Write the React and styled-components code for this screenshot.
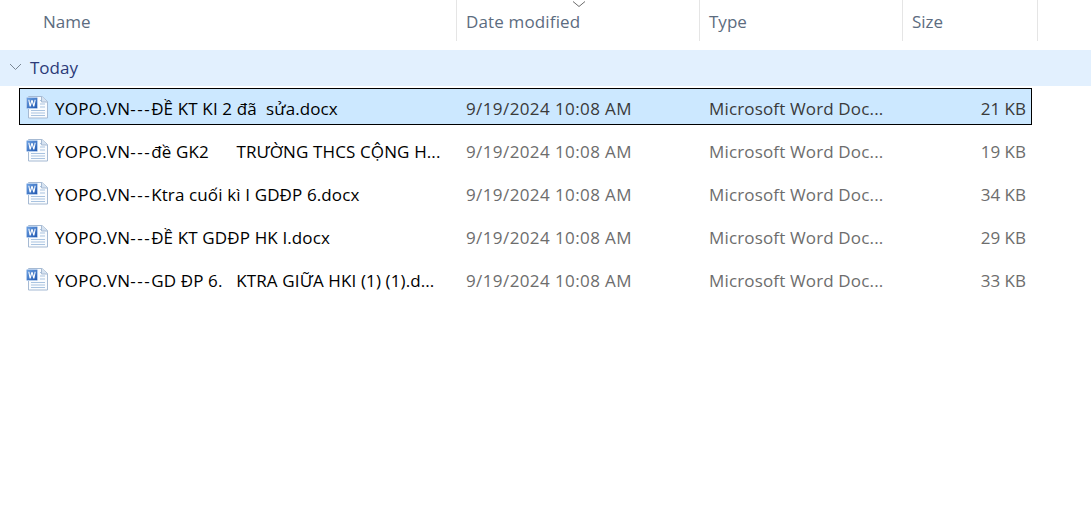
import React from "react";
import styled, { createGlobalStyle } from "styled-components";

const Global = createGlobalStyle`
  html, body { margin: 0; padding: 0; background: #fff; }
  body { font-family: "Open Sans", "Noto Sans", "Liberation Sans", sans-serif; }
`;

const Page = styled.div`
  width: 1091px;
  height: 519px;
  overflow: hidden;
  background: #fff;
`;

const Header = styled.div`
  display: grid;
  grid-template-columns: 457px 243px 203px 135px;
  height: 41px;
  margin-bottom: 9px;
`;

const HeaderCell = styled.div`
  position: relative;
  box-sizing: border-box;
  height: 41px;
  padding: 10px 0 0 ${(p) => p.$pad}px;
  font-size: 17px;
  line-height: 23px;
  letter-spacing: ${(p) => p.$ls || 0}px;
  color: #5c6c80;
  border-right: 1px solid #e5e5e5;
  white-space: nowrap;
`;

const SortArrow = styled.svg`
  position: absolute;
  left: 115px;
  top: 0;
  width: 14px;
  height: 8px;
`;

const Group = styled.div`
  display: flex;
  align-items: center;
  box-sizing: border-box;
  height: 36px;
  background: #e2f0fe;
  padding: 0 0 2px 9px;
  gap: 8px;
  margin-bottom: 2px;
`;

const GroupLabel = styled.span`
  font-size: 17px;
  line-height: 23px;
  color: #2b3a78;
`;

const Row = styled.div`
  display: grid;
  grid-template-columns: 446px 243px 203px 114px;
  box-sizing: border-box;
  align-items: center;
  width: 1013px;
  height: 37px;
  margin: 0 0 6px 19px;
  border: 1px solid ${(p) => (p.$selected ? "#000" : "transparent")};
  background: ${(p) => (p.$selected ? "#cce8ff" : "transparent")};
  color: ${(p) => (p.$selected ? "#3a3a3a" : "#6d6d6d")};
  font-size: 17px;
  line-height: 23px;
  padding-top: 4px;
  white-space: pre;
`;

const NameCell = styled.div`
  display: flex;
  align-items: center;
  padding-left: 5px;
  color: #000;
`;

const IconSlot = styled.span`
  display: flex;
  margin-top: -4px;
`;

const FileName = styled.span`
  margin-left: 5px;
  letter-spacing: 0.24px;
`;

const Dashes = styled.span`
  letter-spacing: 1.5px;
`;

const Rest = styled.span`
  letter-spacing: 0.1px;
  word-spacing: 0.1px;
`;

const DateCell = styled.div`
  letter-spacing: 0.4px;
`;

const TypeCell = styled.div`
  letter-spacing: 0.15px;
`;

const SizeCell = styled.div`
  text-align: right;
`;

const WordIcon = () => (
  <svg width="25" height="24" viewBox="0 0 25 24">
    <defs>
      <linearGradient id="wordBadge" x1="0" y1="0" x2="1" y2="1">
        <stop offset="0" stopColor="#6ea3e4" />
        <stop offset="1" stopColor="#1f55ad" />
      </linearGradient>
    </defs>
    <path d="M3.500 1.500H17l5.500 5v16.500h-19z" fill="#fafcfe" stroke="#a6bad3" />
    <path d="M16.500 1.500v5.500h6" fill="#d5e2f1" stroke="#a6bad3" />
    <path d="M6 15.500h14M6 18h14M6 20.500h14M15 5.500h1M15 9h5M15 12h5" stroke="#a9c3e0" fill="none" />
    <rect x="1.500" y="2.500" width="11" height="11" rx="1" fill="url(#wordBadge)" stroke="#b4cdee" />
    <path d="M3.300 4.700l1.300 6.800h1.100L7 7l1.300 4.500h1.100l1.300-6.800H9.600l-.7 4.400L7.500 5h-1L5.100 9.100l-.7-4.400z" fill="#fff" />
  </svg>
);

const files = [
  { rest: "ĐỀ KT KI 2 đã  sửa.docx", size: "21 KB", selected: true },
  { rest: "đề GK2      TRƯỜNG THCS CỘNG H...", size: "19 KB" },
  { rest: "Ktra cuối kì I GDĐP 6.docx", size: "34 KB" },
  { rest: "ĐỀ KT GDĐP HK I.docx", size: "29 KB" },
  { rest: "GD ĐP 6.   KTRA GIỮA HKI (1) (1).d...", size: "33 KB" },
];

export default function App() {
  return (
    <Page>
      <Global />
      <Header>
        <HeaderCell $pad={43}>Name</HeaderCell>
        <HeaderCell $pad={9} $ls={0.15}>
          Date modified
          <SortArrow viewBox="0 0 14 8">
            <path d="M1 1.500l6 5 6-5" fill="none" stroke="#6b6b6b" />
          </SortArrow>
        </HeaderCell>
        <HeaderCell $pad={9}>Type</HeaderCell>
        <HeaderCell $pad={9}>Size</HeaderCell>
      </Header>
      <Group>
        <svg width="13" height="8" viewBox="0 0 13 8">
          <path d="M1 1l5.500 5.500L12 1" fill="none" stroke="#7a8794" />
        </svg>
        <GroupLabel>Today</GroupLabel>
      </Group>
      {files.map((f) => (
        <Row key={f.rest} $selected={f.selected}>
          <NameCell>
            <IconSlot>
              <WordIcon />
            </IconSlot>
            <FileName>
              YOPO.VN<Dashes>---</Dashes>
              <Rest>{f.rest}</Rest>
            </FileName>
          </NameCell>
          <DateCell>9/19/2024 10:08 AM</DateCell>
          <TypeCell>Microsoft Word Doc...</TypeCell>
          <SizeCell>{f.size}</SizeCell>
        </Row>
      ))}
    </Page>
  );
}
